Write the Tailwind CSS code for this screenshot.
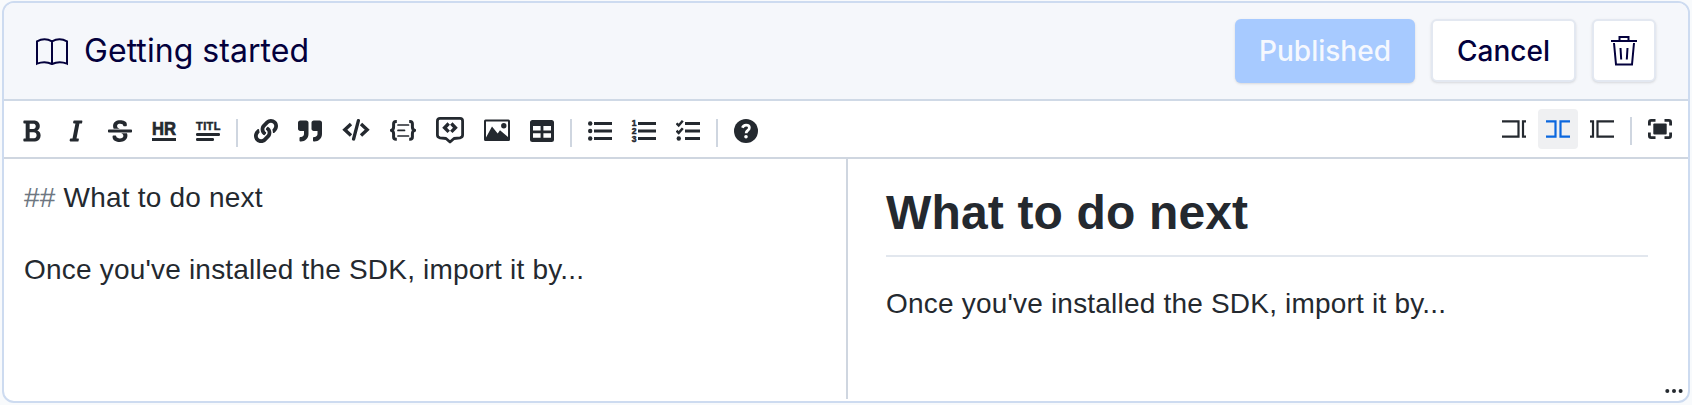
<!DOCTYPE html>
<html lang="en">
<head>
<meta charset="utf-8">
<title>Getting started</title>
<script src="https://cdn.jsdelivr.net/npm/@tailwindcss/browser@4"></script>
</head>
<body class="h-[405px] overflow-hidden bg-[#f8fafc] pt-px pl-[2px]">
<main class="relative flex h-[402px] w-[1688px] flex-col overflow-hidden rounded-[12px] border-2 border-[#cddbf0] bg-white font-['Liberation_Sans',sans-serif] text-[#24292f]">
  <header class="flex h-[98px] shrink-0 items-start border-b-2 border-[#cfd9e6] bg-[#f5f7fb] pr-8 pl-8 font-[Inter,sans-serif] text-[#03003c]">
    <svg class="mt-[34px] h-[30px] w-8 shrink-0" viewBox="0 0 32 30" fill="none" stroke="currentColor" stroke-width="2"><path d="M16 4v24M16 4.300C11 1.500 6 1.500 1 4.300v22.400C6 24.600 11 24.600 16 27M16 4.300C21 1.500 26 1.500 31 4.300v22.400C26 24.600 21 24.600 16 27"/></svg>
    <h1 class="mt-[28px] ml-4 text-[32px] leading-[40px] tracking-[0.05px] whitespace-nowrap">Getting started</h1>
    <div class="mt-4 ml-auto flex gap-4 text-[28px] font-medium">
      <button class="h-16 w-[180px] rounded-[6px] bg-[#a7caff] text-[#f5f8fe] shadow-sm">Published</button>
      <button class="h-[63px] w-[145px] rounded-[6px] border-2 border-[#e3e8f1] bg-white shadow-sm">Cancel</button>
      <button class="flex h-[63px] w-16 items-center justify-center rounded-[6px] border-2 border-[#e3e8f1] bg-white shadow-sm" aria-label="Delete">
        <svg class="h-8 w-7" viewBox="0 0 28 32" fill="none" stroke="currentColor" stroke-width="2"><path d="M1 6h26M9.500 6V2h9v4M4 8l2 21.500h16L24 8M10.500 13l.7 11.500M17.500 13l-.7 11.500"/></svg>
      </button>
    </div>
  </header>
  <div class="flex h-[58px] shrink-0 items-start border-b-2 border-[#cfd6e0] px-2">
    <div class="mt-[10px] flex items-center gap-1">
      <button class="flex h-10 w-10 items-center justify-center" aria-label="Bold"><svg class="h-6 w-6" viewBox="0 0 384 512" fill="currentColor"><path d="M304.793 243.891c33.639-18.537 53.657-54.16 53.657-95.693 0-48.236-26.25-87.626-68.626-104.179C265.138 34.01 240.849 32 209.661 32H24c-8.837 0-16 7.163-16 16v33.049c0 8.837 7.163 16 16 16h33.113v318.53H24c-8.837 0-16 7.163-16 16V464c0 8.837 7.163 16 16 16h195.69c24.203 0 44.834-1.289 66.866-7.584C337.52 457.193 376 410.647 376 350.014c0-52.168-26.573-91.684-71.207-106.123zM142.217 100.809h67.444c16.294 0 27.536 2.019 37.525 6.717 15.828 8.479 24.906 26.502 24.906 49.446 0 35.029-20.32 56.79-53.029 56.79h-76.846V100.809zm112.642 305.475c-10.14 4.056-22.677 4.907-31.409 4.907h-81.233V281.943h84.367c39.645 0 63.057 25.38 63.057 63.028.001 28.425-13.66 52.483-34.782 61.313z"/></svg></button>
      <button class="flex h-10 w-10 items-center justify-center" aria-label="Italic"><svg class="h-6 w-6" viewBox="0 0 320 512" fill="currentColor"><path d="M204.758 416h-33.849l62.092-320h40.725a16 16 0 0 0 15.704-12.937l6.242-32C297.599 41.184 290.034 32 279.968 32H120.235a16 16 0 0 0-15.704 12.937l-6.242 32C96.362 86.816 103.927 96 113.993 96h33.846l-62.09 320H46.278a16 16 0 0 0-15.704 12.935l-6.245 32C22.402 470.815 29.967 480 40.034 480h158.479a16 16 0 0 0 15.704-12.935l6.245-32c1.927-9.88-5.638-19.065-15.704-19.065z"/></svg></button>
      <button class="flex h-10 w-10 items-center justify-center" aria-label="Strikethrough"><svg class="h-6 w-6" viewBox="0 0 512 512" fill="currentColor"><path d="M496 288H16c-8.837 0-16-7.163-16-16v-32c0-8.837 7.163-16 16-16h480c8.837 0 16 7.163 16 16v32c0 8.837-7.163 16-16 16zm-214.666 16c27.258 12.937 46.524 28.683 46.524 56.243 0 33.108-28.977 53.676-75.621 53.676-32.325 0-76.874-12.08-76.874-44.271V368c0-8.837-7.164-16-16-16H113.75c-8.836 0-16 7.163-16 16v19.204c0 66.845 77.717 101.82 154.487 101.82 88.578 0 162.013-45.438 162.013-134.424 0-19.815-3.618-36.417-10.143-50.6H281.334zm-30.952-96c-32.422-13.505-56.836-28.946-56.836-59.683 0-33.92 30.901-47.406 64.962-47.406 42.647 0 64.962 16.593 64.962 32.985V136c0 8.837 7.163 16 16 16h45.613c8.836 0 16-7.163 16-16v-30.318c0-52.438-71.725-79.875-142.575-79.875-85.203 0-150.726 40.972-150.726 125.646 0 22.71 4.665 41.176 12.777 56.547h129.823z"/></svg></button>
      <button class="flex h-10 w-10 items-center justify-center" aria-label="Horizontal rule"><svg class="h-6 w-6 overflow-visible" viewBox="0 0 24 24" fill="currentColor"><text x="0" y="15.500" font-family="Liberation Sans" font-weight="700" font-size="18" textLength="24" lengthAdjust="spacingAndGlyphs" stroke="currentColor" stroke-width=".7">HR</text><path d="M0 19h24v3H0z"/></svg></button>
      <button class="flex h-10 w-10 items-center justify-center" aria-label="Title"><svg class="h-6 w-6 overflow-visible" viewBox="0 0 24 24" fill="currentColor"><text x="0" y="11" font-family="Liberation Sans" font-weight="700" font-size="11" textLength="24.500" lengthAdjust="spacing" stroke="currentColor" stroke-width=".5">TITL</text><rect y="14" width="24" height="3" rx="1.200"/><rect y="19" width="18" height="3" rx="1.200"/></svg></button>
      <i class="mx-1 mt-[4px] h-7 w-[2px] bg-[#cfd6e0]"></i>
      <button class="flex h-10 w-10 items-center justify-center" aria-label="Link"><svg class="h-6 w-6" viewBox="0 0 512 512" fill="currentColor"><path d="M326.612 185.391c59.747 59.809 58.927 155.698.36 214.59-.11.12-.24.25-.36.37l-67.2 67.2c-59.27 59.27-155.699 59.262-214.96 0-59.27-59.26-59.27-155.7 0-214.96l37.106-37.106c9.84-9.84 26.786-3.3 27.294 10.606.648 17.722 3.826 35.527 9.69 52.721 1.986 5.822.567 12.262-3.783 16.612l-13.087 13.087c-28.026 28.026-28.905 73.66-1.155 101.96 28.024 28.579 74.086 28.749 102.325.51l67.2-67.19c28.191-28.191 28.073-73.757 0-101.83-3.701-3.694-7.429-6.564-10.341-8.569a16.037 16.037 0 0 1-6.947-12.606c-.396-10.567 3.348-21.456 11.698-29.806l21.054-21.055c5.521-5.521 14.182-6.199 20.584-1.731a152.482 152.482 0 0 1 20.522 17.197zM467.547 44.449c-59.261-59.262-155.69-59.27-214.96 0l-67.2 67.2c-.12.12-.25.25-.36.37-58.566 58.892-59.387 154.781.36 214.59a152.454 152.454 0 0 0 20.521 17.196c6.402 4.468 15.064 3.789 20.584-1.731l21.054-21.055c8.35-8.35 12.094-19.239 11.698-29.806a16.037 16.037 0 0 0-6.947-12.606c-2.912-2.005-6.64-4.875-10.341-8.569-28.073-28.073-28.191-73.639 0-101.83l67.2-67.19c28.239-28.239 74.3-28.069 102.325.51 27.75 28.3 26.872 73.934-1.155 101.96l-13.087 13.087c-4.35 4.35-5.769 10.79-3.783 16.612 5.864 17.194 9.042 34.999 9.69 52.721.509 13.906 17.454 20.446 27.294 10.606l37.106-37.106c59.271-59.259 59.271-155.699.001-214.959z"/></svg></button>
      <button class="flex h-10 w-10 items-center justify-center" aria-label="Quote"><svg class="h-6 w-6" viewBox="0 0 512 512" fill="currentColor"><path d="M464 32H336c-26.500 0-48 21.500-48 48v128c0 26.500 21.500 48 48 48h80v64c0 35.300-28.700 64-64 64h-8c-13.300 0-24 10.700-24 24v48c0 13.300 10.700 24 24 24h8c88.400 0 160-71.600 160-160V80c0-26.500-21.500-48-48-48zm-288 0H48C21.500 32 0 53.500 0 80v128c0 26.500 21.500 48 48 48h80v64c0 35.300-28.700 64-64 64h-8c-13.300 0-24 10.700-24 24v48c0 13.300 10.700 24 24 24h8c88.400 0 160-71.600 160-160V80c0-26.500-21.500-48-48-48z"/></svg></button>
      <button class="flex h-10 w-11 items-center justify-center" aria-label="Code"><svg class="h-6 w-7" viewBox="0 0 28 24" fill="none" stroke="currentColor"><path stroke-width="3.400" d="M9 5L2.800 10.800L9 16.600M19 5l6.200 5.800L19 16.600"/><path stroke-width="3.300" stroke-linecap="round" d="M16.400 1.600L11.600 20"/></svg></button>
      <button class="flex h-10 w-[42px] items-center justify-center" aria-label="Code block"><svg class="h-6 w-[26px]" viewBox="0 0 26 24" fill="none" stroke="currentColor"><path stroke-width="3" stroke-linejoin="round" d="M6.800 2.500H6C4.500 2.500 3.600 3.300 3.600 4.800v3.300c0 1.700-.7 2.900-2.400 3.300 1.700.4 2.400 1.600 2.400 3.300v3.300c0 1.500.9 2.300 2.400 2.300h.8M19.200 2.500h.8c1.500 0 2.400.8 2.400 2.300v3.300c0 1.700.7 2.900 2.400 3.300-1.700.4-2.400 1.600-2.400 3.300v3.300c0 1.500-.9 2.300-2.400 2.300h-.8"/><path stroke-width="1.700" stroke-linecap="round" d="M8 6h10.500M8 11.400h6.500M8 17h10.500"/></svg></button>
      <button class="flex h-10 w-11 items-center justify-center" aria-label="Comment"><svg class="h-7 w-7" viewBox="0 0 28 28" fill="none" stroke="currentColor"><path stroke-width="2.800" stroke-linejoin="round" d="M4 1.400h20c1.600 0 2.600 1 2.600 2.600v14c0 1.600-1 2.400-2.600 2.800L18 21.500l-4 3.500-4-3.500-6-.7c-1.600-.4-2.600-1.200-2.600-2.800V4c0-1.600 1-2.600 2.600-2.600z"/><path stroke-width="3.400" d="M12.700 6.500L8.600 10.700l4.100 4.200M15.300 6.500l4.100 4.200-4.100 4.200"/></svg></button>
      <button class="flex h-10 w-[42px] items-center justify-center" aria-label="Image"><svg class="h-6 w-[26px]" viewBox="0 0 26 24" fill="currentColor"><path fill-rule="evenodd" d="M1.500 .5h23a1.500 1.500 0 0 1 1.500 1.500v18.500a1.500 1.500 0 0 1-1.500 1.500h-23A1.500 1.500 0 0 1 0 20.500V2A1.500 1.500 0 0 1 1.500 .5zM2 2.500V18.500L8 7.500l5.700 7 2.300-3.200L24 18V2.500z"/><circle cx="19.800" cy="6.800" r="2.700"/></svg></button>
      <button class="flex h-10 w-10 items-center justify-center" aria-label="Table"><svg class="h-6 w-6" viewBox="0 0 24 24" fill="currentColor"><path fill-rule="evenodd" d="M2.500 1h19A2.500 2.500 0 0 1 24 3.500v17a2.500 2.500 0 0 1-2.500 2.500h-19A2.500 2.500 0 0 1 0 20.500v-17A2.500 2.500 0 0 1 2.500 1zM3 7v4.500h7.600V7zM13.400 7v4.500H21V7zM3 14.300v4.500h7.600v-4.500zM13.400 14.300v4.500H21v-4.500z"/></svg></button>
      <i class="mx-1 mt-[4px] h-7 w-[2px] bg-[#cfd6e0]"></i>
      <button class="flex h-10 w-10 items-center justify-center" aria-label="Unordered list"><svg class="h-6 w-6" viewBox="0 0 24 24" fill="currentColor"><circle cx="2.200" cy="4.500" r="2.200"/><circle cx="2.200" cy="12" r="2.200"/><circle cx="2.200" cy="19.500" r="2.200"/><path d="M6 3h18v3H6zM6 10.500h18v3H6zM6 18h18v3H6z"/></svg></button>
      <button class="flex h-10 w-10 items-center justify-center" aria-label="Ordered list"><svg class="h-6 w-6 overflow-visible" viewBox="0 0 24 24" fill="currentColor"><g font-family="Liberation Sans" font-weight="700" font-size="8.500" stroke="currentColor" stroke-width=".5"><text x="-.2" y="7.300">1</text><text x="-.2" y="15">2</text><text x="-.2" y="22.700">3</text></g><path d="M6 3h18v3H6zM6 10.500h18v3H6zM6 18h18v3H6z"/></svg></button>
      <button class="flex h-10 w-10 items-center justify-center" aria-label="Checked list"><svg class="h-6 w-6" viewBox="0 0 24 24" fill="currentColor"><path fill="none" stroke="currentColor" stroke-width="2.500" d="M.5 4.300l2.200 2.200L6.800 1.800M.5 11.700l2.200 2.200L6.800 9.200"/><circle cx="2.800" cy="19.500" r="2.200"/><path d="M9 3h15v3H9zM9 10.500h15v3H9zM9 18h15v3H9z"/></svg></button>
      <i class="mx-1 mt-[4px] h-7 w-[2px] bg-[#cfd6e0]"></i>
      <button class="flex h-10 w-10 items-center justify-center" aria-label="Help"><svg class="h-6 w-6" viewBox="0 0 24 24"><circle cx="12" cy="12" r="12" fill="currentColor"/><path fill="none" stroke="#fff" stroke-width="2.700" d="M8.400 8.800C9 7.100 10.200 6.100 12.100 6.100c1.900 0 3.300 1.100 3.300 2.700 0 2.700-3.300 2.500-3.300 5.400"/><circle cx="12" cy="17.700" r="1.800" fill="#fff"/></svg></button>
    </div>
    <div class="mt-2 ml-auto flex items-center gap-1">
      <button class="flex h-10 w-10 items-center justify-center" aria-label="Preview"><svg class="h-6 w-6" viewBox="0 0 24 24" fill="none" stroke="currentColor" stroke-width="2.200"><path d="M0 4.300h16.500v15.400H0M24 4.300h-3v15.400h3"/></svg></button>
      <button class="flex h-10 w-10 items-center justify-center rounded-[4px] bg-[#eff0f2] text-[#0b67de]" aria-label="Live"><svg class="h-6 w-6" viewBox="0 0 24 24" fill="none" stroke="currentColor" stroke-width="2.200"><path d="M0 4.300h9.500v15.400H0M24 4.300h-9.500v15.400H24"/></svg></button>
      <button class="flex h-10 w-10 items-center justify-center" aria-label="Edit"><svg class="h-6 w-6" viewBox="0 0 24 24" fill="none" stroke="currentColor" stroke-width="2.200"><path d="M24 4.300H7.500v15.400H24M0 4.300h3v15.400H0"/></svg></button>
      <i class="mx-1 mt-[4px] h-7 w-[2px] bg-[#cfd6e0]"></i>
      <button class="flex h-10 w-10 items-center justify-center" aria-label="Fullscreen"><svg class="h-6 w-6" viewBox="0 0 24 24" fill="none" stroke="currentColor" stroke-width="2.800"><path d="M1.400 8.500V5.200Q1.400 3.400 3.200 3.400H7.500M16.500 3.400h4.300q1.800 0 1.800 1.800v3.300M1.400 15.500v3.300q0 1.800 1.800 1.800H7.500M16.500 20.600h4.300q1.800 0 1.800-1.800v-3.300"/><rect x="5.300" y="6.500" width="13.400" height="11" rx="1" fill="currentColor" stroke="none"/></svg></button>
    </div>
  </div>
  <div class="flex h-[240px] text-[28px] leading-[36px] tracking-[0.2px]">
    <section class="w-[842px] shrink-0 pt-[21px] pl-5 whitespace-nowrap">
      <p><span class="text-[#6e7781]">##</span> What to do next</p>
      <p class="mt-9">Once you've installed the SDK, import it by...</p>
    </section>
    <article class="grow border-l-2 border-[#cfd6e0] pt-[24px] pr-10 pl-[38px]">
      <h2 class="h-[74px] border-b-2 border-[#e2e7ee] text-[48px] leading-[60px] font-bold tracking-[0.15px] whitespace-nowrap">What to do next</h2>
      <p class="mt-[29px] whitespace-nowrap">Once you've installed the SDK, import it by...</p>
    </article>
  </div>
  <svg class="absolute right-[3px] bottom-[6px] h-[8px] w-5" viewBox="0 0 20 8" fill="currentColor"><circle cx="2.300" cy="4" r="2"/><circle cx="9" cy="4" r="2"/><circle cx="15.600" cy="4" r="2"/></svg>
</main>
</body>
</html>
